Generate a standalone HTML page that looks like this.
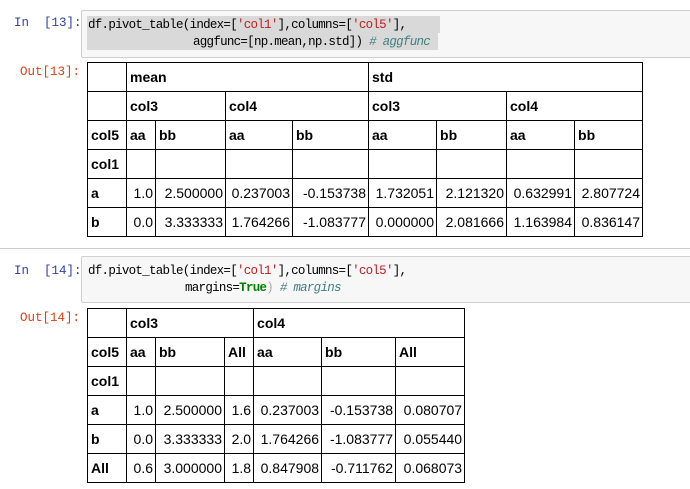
<!DOCTYPE html><html><head><style>
body{margin:0;width:690px;height:489px;background:#fff;position:relative;overflow:hidden;font-family:"Liberation Sans",Arial,sans-serif}
.p{position:absolute;font-family:"Liberation Mono",monospace;font-size:12.5px}
.in{color:#303f9f}.out{color:#d84315}
.box{position:absolute;left:81px;width:620px;background:#f7f7f7;border:1px solid #cfcfcf;border-radius:2px}
.code{position:absolute;font-family:"Liberation Mono",monospace;font-size:12.5px;letter-spacing:-0.73px;line-height:16px;white-space:pre;color:#000}
.s{color:#ba2121}.c{color:#408080;font-style:italic}.k{color:#008000;font-weight:bold}.g{color:#aaa}
table{position:absolute;left:87px;border-collapse:collapse;table-layout:fixed;font-size:14px}
td{border:1px solid #000;height:29px;padding:0 2px;text-align:right;white-space:nowrap;overflow:hidden;box-sizing:border-box}
td.h{font-weight:bold;text-align:left;padding-left:3px}
</style></head><body>
<div class="p in" style="left:14px;top:16px">In&nbsp;&nbsp;[13]:</div>
<div class="box" style="top:10px;height:46px"></div>
<div style="position:absolute;left:87px;top:16px;width:353px;height:17px;background:#d9d9d9"></div>
<div style="position:absolute;left:87px;top:33px;width:351px;height:17px;background:#d9d9d9"></div>
<div class="code" style="left:88px;top:17px">df.pivot_table(index=[<span class="s">'col1'</span>],columns=[<span class="s">'col5'</span>],</div>
<div class="code" style="left:193px;top:34px">aggfunc=[np.mean,np.std]) <span class="c"># aggfunc</span></div>
<div class="p out" style="left:20px;top:65px">Out[13]:</div>
<table style="top:62px;width:556px">
<colgroup><col style="width:39px"><col style="width:29px"><col style="width:70px"><col style="width:67px"><col style="width:76px"><col style="width:68px"><col style="width:70px"><col style="width:68px"><col style="width:68px"></colgroup>
<tr><td></td><td class="h" colspan="4">mean</td><td class="h" colspan="4">std</td></tr>
<tr><td></td><td class="h" colspan="2">col3</td><td class="h" colspan="2">col4</td><td class="h" colspan="2">col3</td><td class="h" colspan="2">col4</td></tr>
<tr><td class="h">col5</td><td class="h">aa</td><td class="h">bb</td><td class="h">aa</td><td class="h">bb</td><td class="h">aa</td><td class="h">bb</td><td class="h">aa</td><td class="h">bb</td></tr>
<tr><td class="h">col1</td><td></td><td></td><td></td><td></td><td></td><td></td><td></td><td></td></tr>
<tr><td class="h">a</td><td>1.0</td><td>2.500000</td><td>0.237003</td><td>-0.153738</td><td>1.732051</td><td>2.121320</td><td>0.632991</td><td>2.807724</td></tr>
<tr><td class="h">b</td><td>0.0</td><td>3.333333</td><td>1.764266</td><td>-1.083777</td><td>0.000000</td><td>2.081666</td><td>1.163984</td><td>0.836147</td></tr>
</table>
<div style="position:absolute;left:0;top:248px;width:690px;height:1px;background:#ccc"></div>
<div class="p in" style="left:14px;top:264px">In&nbsp;&nbsp;[14]:</div>
<div class="box" style="top:256px;height:45px"></div>
<div class="code" style="left:88px;top:263px">df.pivot_table(index=[<span class="s">'col1'</span>],columns=[<span class="s">'col5'</span>],</div>
<div class="code" style="left:185px;top:280px">margins=<span class="k">True</span><span class="g">)</span> <span class="c"># margins</span></div>
<div class="p out" style="left:20px;top:311px">Out[14]:</div>
<table style="top:308px;width:378px">
<colgroup><col style="width:39px"><col style="width:29px"><col style="width:69px"><col style="width:29px"><col style="width:68px"><col style="width:74px"><col style="width:69px"></colgroup>
<tr><td></td><td class="h" colspan="3">col3</td><td class="h" colspan="3">col4</td></tr>
<tr><td class="h">col5</td><td class="h">aa</td><td class="h">bb</td><td class="h">All</td><td class="h">aa</td><td class="h">bb</td><td class="h">All</td></tr>
<tr><td class="h">col1</td><td></td><td></td><td></td><td></td><td></td><td></td></tr>
<tr><td class="h">a</td><td>1.0</td><td>2.500000</td><td>1.6</td><td>0.237003</td><td>-0.153738</td><td>0.080707</td></tr>
<tr><td class="h">b</td><td>0.0</td><td>3.333333</td><td>2.0</td><td>1.764266</td><td>-1.083777</td><td>0.055440</td></tr>
<tr><td class="h">All</td><td>0.6</td><td>3.000000</td><td>1.8</td><td>0.847908</td><td>-0.711762</td><td>0.068073</td></tr>
</table>
</body></html>
